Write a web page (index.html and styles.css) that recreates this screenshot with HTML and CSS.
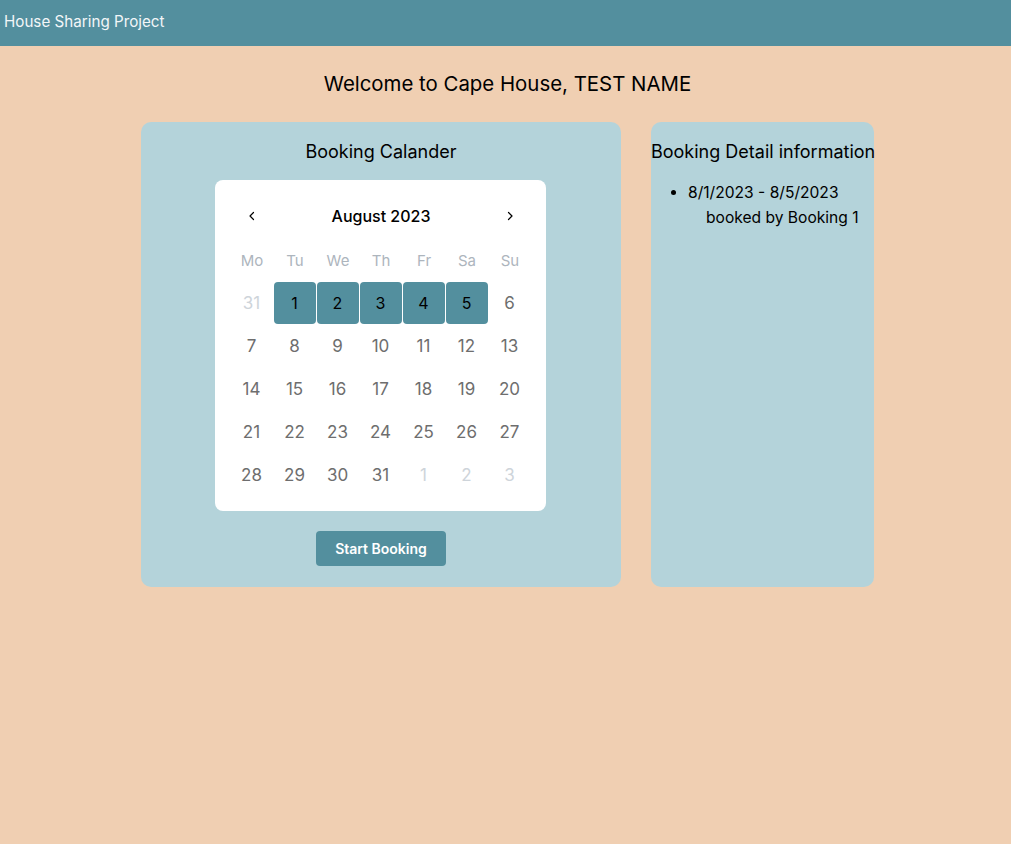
FILE: index.html
```html
<!DOCTYPE html>
<html lang="en">
<head>
<meta charset="utf-8">
<title>House Sharing Project</title>
<link rel="stylesheet" href="styles.css">
</head>
<body>
<header class="topbar">House Sharing Project</header>
<main class="page">
  <h1 class="welcome">Welcome to Cape House, TEST NAME</h1>
  <div class="panels">
    <section class="panel panel-calendar">
      <h2 class="panel-title">Booking Calander</h2>
      <div class="calendar">
        <div class="cal-head">
          <button class="cal-nav" aria-label="Previous month">
            <svg width="16" height="16" viewBox="0 0 16 16" fill="none"><path d="M9.5 4.5 6 8l3.5 3.5" stroke="#000" stroke-width="1.2" stroke-linecap="round" stroke-linejoin="round"/></svg>
          </button>
          <div class="cal-month">August 2023</div>
          <button class="cal-nav" aria-label="Next month">
            <svg width="16" height="16" viewBox="0 0 16 16" fill="none"><path d="M6.5 4.5 10 8l-3.5 3.5" stroke="#000" stroke-width="1.2" stroke-linecap="round" stroke-linejoin="round"/></svg>
          </button>
        </div>
        <div class="cal-grid cal-weekdays">
          <span>Mo</span><span>Tu</span><span>We</span><span>Th</span><span>Fr</span><span>Sa</span><span>Su</span>
        </div>
        <div class="cal-grid cal-days">
          <span class="day outside">31</span><span class="day sel">1</span><span class="day sel">2</span><span class="day sel">3</span><span class="day sel">4</span><span class="day sel">5</span><span class="day">6</span>
          <span class="day">7</span><span class="day">8</span><span class="day">9</span><span class="day">10</span><span class="day">11</span><span class="day">12</span><span class="day">13</span>
          <span class="day">14</span><span class="day">15</span><span class="day">16</span><span class="day">17</span><span class="day">18</span><span class="day">19</span><span class="day">20</span>
          <span class="day">21</span><span class="day">22</span><span class="day">23</span><span class="day">24</span><span class="day">25</span><span class="day">26</span><span class="day">27</span>
          <span class="day">28</span><span class="day">29</span><span class="day">30</span><span class="day">31</span><span class="day outside">1</span><span class="day outside">2</span><span class="day outside">3</span>
        </div>
      </div>
      <button class="btn">Start Booking</button>
    </section>
    <section class="panel panel-detail">
      <h2 class="panel-title detail-title">Booking Detail information</h2>
      <ul class="booking-list">
        <li>8/1/2023 - 8/5/2023<div class="booked-by">booked by Booking 1</div></li>
      </ul>
    </section>
  </div>
</main>
</body>
</html>
```
FILE: styles.css
```css
* { box-sizing: border-box; }
html, body {
  margin: 0;
  height: 100%;
}
body {
  background: #f0cfb2;
  font-family: Inter, "Noto Sans", sans-serif;
  color: #000;
}
.topbar {
  background: #538f9e;
  color: #f2f6f8;
  height: 46px;
  padding: 0 4px;
  font-size: 15.2px;
  line-height: 43px;
}
.page {
  display: flex;
  flex-direction: column;
  align-items: center;
  padding-left: 4px;
}
.welcome {
  margin: 26px 0 26px;
  font-size: 20.4px;
  font-weight: 400;
  line-height: 24px;
}
.panels {
  display: flex;
  gap: 30px;
}
.panel {
  background: #b4d3da;
  border-radius: 10px;
  height: 465px;
}
.panel-calendar {
  width: 480px;
  padding: 19px 0 0;
  display: flex;
  flex-direction: column;
  align-items: center;
}
.panel-title {
  margin: 0;
  font-size: 18px;
  font-weight: 400;
  line-height: 22px;
}
.calendar {
  margin: 17px 2px 0 0;
  width: 331px;
  background: #fff;
  border-radius: 8px;
  padding: 15px 14px 15px 16px;
}
.cal-head {
  display: flex;
  align-items: center;
  justify-content: space-between;
  height: 42px;
  padding: 0 5px;
}
.cal-nav {
  width: 32px;
  height: 32px;
  border: 0;
  background: none;
  padding: 0;
  display: flex;
  align-items: center;
  justify-content: center;
}
.cal-month {
  font-size: 16px;
  font-weight: 500;
}
.cal-grid {
  display: grid;
  grid-template-columns: repeat(7, 43px);
}
.cal-weekdays {
  height: 44px;
  align-items: center;
  padding-top: 3px;
}
.cal-weekdays span {
  text-align: center;
  font-size: 15px;
  color: #adb5bd;
}
.cal-days {
  grid-auto-rows: 43px;
}
.day {
  width: 42px;
  height: 42px;
  display: flex;
  align-items: center;
  justify-content: center;
  font-size: 17px;
  color: #6e6e6e;
  border-radius: 4px;
  margin-top: 1px;
}
.day.outside { color: #ced4da; }
.day.sel {
  background: #538f9e;
  color: #000;
  font-size: 16px;
}
.btn {
  margin-top: 20px;
  width: 130px;
  height: 35px;
  border: 0;
  border-radius: 4px;
  background: #538f9e;
  color: #fff;
  font-family: Inter, "Noto Sans", sans-serif;
  font-size: 14px;
  font-weight: 600;
}
.panel-detail {
  width: 223px;
  padding-top: 19px;
}
.detail-title {
  white-space: nowrap;
}
.booking-list {
  margin: 17px 0 0;
  padding-left: 37px;
  font-size: 15.6px;
  line-height: 25px;
}
.booked-by {
  padding-left: 18px;
}
```
